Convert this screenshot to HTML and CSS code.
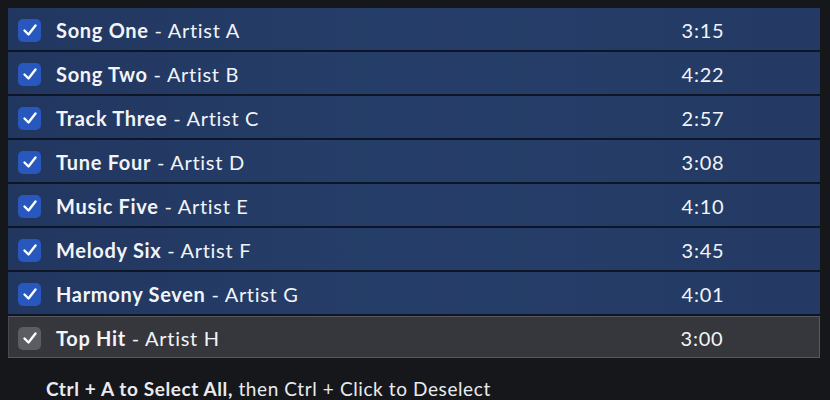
FILE: index.html
```html
<!DOCTYPE html>
<html>
<head>
<meta charset="utf-8">
<link rel="stylesheet" href="styles.css">
</head>
<body>
<div class="list">
  <div class="row sel"><span class="cb"><svg viewBox="0 0 22 22"><path d="M5.5 11.5l4 4 7-9"/></svg></span><span class="title"><b>Song One</b> - Artist A</span><span class="time">3:15</span></div>
  <div class="row sel"><span class="cb"><svg viewBox="0 0 22 22"><path d="M5.5 11.5l4 4 7-9"/></svg></span><span class="title"><b>Song Two</b> - Artist B</span><span class="time">4:22</span></div>
  <div class="row sel"><span class="cb"><svg viewBox="0 0 22 22"><path d="M5.5 11.5l4 4 7-9"/></svg></span><span class="title"><b>Track Three</b> - Artist C</span><span class="time">2:57</span></div>
  <div class="row sel"><span class="cb"><svg viewBox="0 0 22 22"><path d="M5.5 11.5l4 4 7-9"/></svg></span><span class="title"><b>Tune Four</b> - Artist D</span><span class="time">3:08</span></div>
  <div class="row sel"><span class="cb"><svg viewBox="0 0 22 22"><path d="M5.5 11.5l4 4 7-9"/></svg></span><span class="title"><b>Music Five</b> - Artist E</span><span class="time">4:10</span></div>
  <div class="row sel"><span class="cb"><svg viewBox="0 0 22 22"><path d="M5.5 11.5l4 4 7-9"/></svg></span><span class="title"><b>Melody Six</b> - Artist F</span><span class="time">3:45</span></div>
  <div class="row sel"><span class="cb"><svg viewBox="0 0 22 22"><path d="M5.5 11.5l4 4 7-9"/></svg></span><span class="title"><b>Harmony Seven</b> - Artist G</span><span class="time">4:01</span></div>
  <div class="row cur"><span class="cb"><svg viewBox="0 0 22 22"><path d="M5.5 11.5l4 4 7-9"/></svg></span><span class="title"><b>Top Hit</b> - Artist H</span><span class="time">3:00</span></div>
</div>
<p class="hint"><b>Ctrl + A to Select All,</b> then Ctrl + Click to Deselect</p>
</body>
</html>
```
FILE: styles.css
```css
html, body {
  margin: 0;
  padding: 0;
  background: #16171b;
  font-family: Lato, "Open Sans", sans-serif;
  color: #f2f4f8;
  overflow: hidden;
}
.list {
  display: flex;
  flex-direction: column;
  padding: 8px 10px 0 8px;
}
.row {
  display: flex;
  align-items: center;
  height: 42px;
  padding: 2px 0 0 10px;
  box-sizing: border-box;
  font-size: 20px;
}
.row.sel {
  height: 44px;
  background: linear-gradient(90deg, #223760 0%, #253e69 50%, #243a64 100%);
  border-bottom: 2px solid #0d1527;
}
.row.cur {
  height: 42px;
  background: #35373c;
  border: 1px solid #56585d;
  border-left-color: #48494e;
  padding-left: 9px;
}
.cb {
  width: 23px;
  height: 23px;
  border-radius: 5px;
  background: #2858bd;
  display: flex;
  align-items: center;
  justify-content: center;
  flex: none;
}
.cur .cb {
  background: #5b5d63;
}
.cb svg {
  width: 22px;
  height: 22px;
  fill: none;
  stroke: #ffffff;
  stroke-width: 2.4;
  stroke-linecap: round;
  stroke-linejoin: round;
}
.title {
  margin-left: 15px;
  flex: 1;
  font-weight: 400;
  letter-spacing: 0.7px;
}
.title b {
  font-weight: 700;
}
.time {
  width: 100px;
  margin-right: 67px;
  text-align: center;
  letter-spacing: 0.8px;
}
.hint {
  margin: 19px 0 0 46px;
  font-size: 19px;
  color: #e9ebef;
  letter-spacing: 0.6px;
}
.hint b {
  font-weight: 700;
}
```
